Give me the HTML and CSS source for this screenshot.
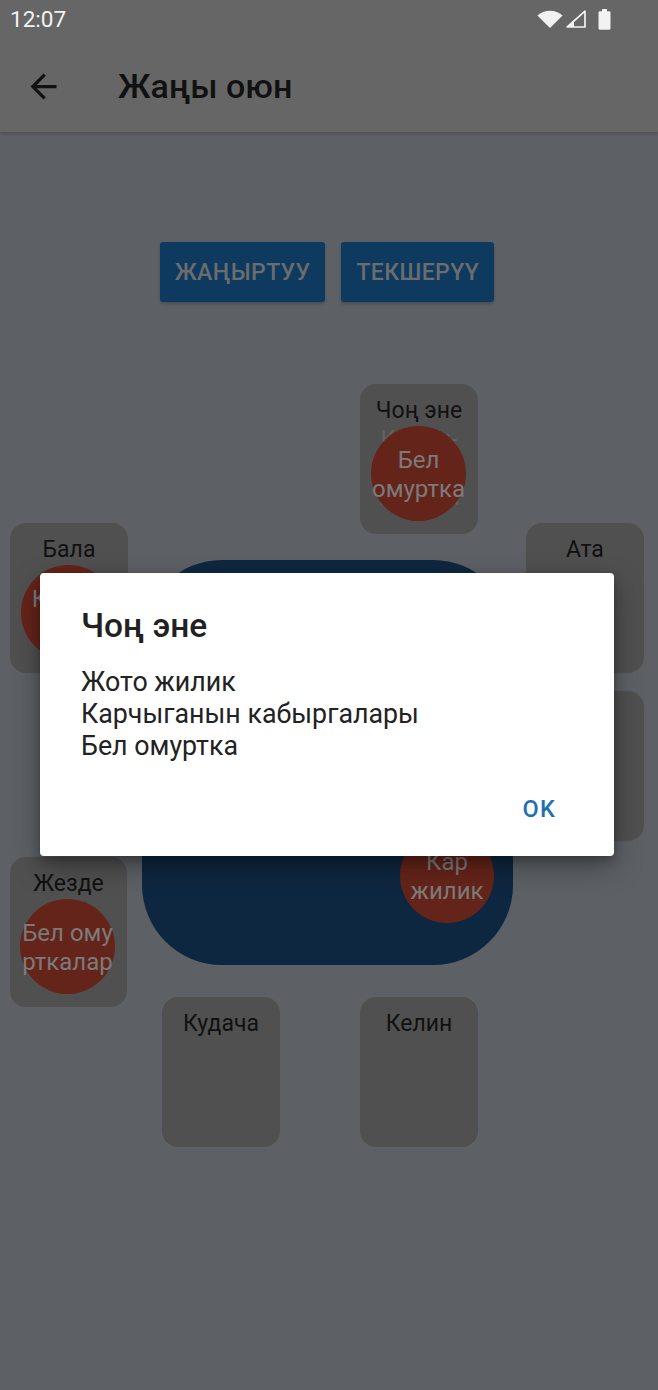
FILE: index.html
```html
<!DOCTYPE html>
<html lang="ky">
<head>
<meta charset="utf-8">
<title>Жаңы оюн</title>
<link rel="stylesheet" href="styles.css">
</head>
<body>
<div class="screen">
  <div class="status">
    <span class="time">12:07</span>
    <div class="sys-icons">
      <svg class="ic-wifi" width="26" height="18" viewBox="0 0 26 18"><path d="M13 18 L0.4 5.6 A18.5 18.5 0 0 1 25.6 5.6 Z" fill="#f2f2f2"/></svg>
      <svg class="ic-signal" width="20" height="18" viewBox="0 0 20 18"><path d="M19 1.2 V17 H1.2 Z" fill="none" stroke="#f2f2f2" stroke-width="1.7" stroke-linejoin="round"/><path d="M1.2 17 L8 10.4 V17 Z" fill="#f2f2f2"/></svg>
      <svg class="ic-battery" width="13" height="21" viewBox="0 0 13 21"><rect x="4" y="0" width="5" height="3" rx="0.6" fill="#f2f2f2"/><rect x="0.5" y="2.2" width="12" height="18.5" rx="1.4" fill="#f2f2f2"/></svg>
    </div>
  </div>

  <header class="appbar">
    <svg class="back" width="39" height="39" viewBox="0 0 24 24"><path d="M20 11H7.83l5.59-5.59L12 4l-8 8 8 8 1.41-1.41L7.83 13H20v-2z" fill="#111"/></svg>
    <h1 class="title">Жаңы оюн</h1>
  </header>

  <main class="content">
    <div class="actions">
      <button class="btn">Жаңыртуу</button>
      <button class="btn">Текшерүү</button>
    </div>

    <div class="board">
      <div class="table">
        <div class="token token--table"><span>Кар</span><span>жилик</span></div>
      </div>

      <div class="seat seat--chon-ene">
        <div class="seat-label">Чоң эне</div>
        <div class="seat-faint">Карчы-</div>
        <div class="seat-faint">ганын</div>
        <div class="seat-faint">кабыра</div>
        <div class="token"><span>Бел</span><span>омуртка</span></div>
      </div>

      <div class="seat seat--bala">
        <div class="seat-label">Бала</div>
        <div class="token"><span>Карчы</span><span>нын</span></div>
      </div>

      <div class="seat seat--ata">
        <div class="seat-label">Ата</div>
      </div>

      <div class="seat seat--ene">
        <div class="seat-label">Эне</div>
      </div>

      <div class="seat seat--jezde">
        <div class="seat-label">Жезде</div>
        <div class="token"><span>Бел ому</span><span>рткалар</span></div>
      </div>

      <div class="seat seat--kudacha">
        <div class="seat-label">Кудача</div>
      </div>

      <div class="seat seat--kelin">
        <div class="seat-label">Келин</div>
      </div>
    </div>
  </main>

  <div class="dialog" role="dialog">
    <h2 class="dialog-title">Чоң эне</h2>
    <div class="dialog-body">
      <div>Жото жилик</div>
      <div>Карчыганын кабыргалары</div>
      <div>Бел омуртка</div>
    </div>
    <div class="dialog-actions">
      <button class="dialog-btn">OK</button>
    </div>
  </div>
</div>
</body>
</html>
```

FILE: styles.css
```css
* { box-sizing: border-box; }

html, body {
  margin: 0;
  padding: 0;
  background: #5d6166;
  font-family: Roboto, "Noto Sans", "Liberation Sans", sans-serif;
}

.screen {
  position: relative;
  width: 658px;
  height: 1390px;
  overflow: hidden;
  background: #5d6166;
}

/* status bar */
.status {
  height: 40px;
  background: #666666;
  display: flex;
  align-items: center;
  justify-content: space-between;
  padding: 0 47px 2px 10px;
}
.time {
  color: #f2f2f2;
  font-size: 22.5px;
}
.sys-icons {
  display: flex;
  align-items: center;
  gap: 3px;
}
.ic-signal { margin-right: 9px; }

/* app bar */
.appbar {
  height: 92px;
  background: #666666;
  display: flex;
  align-items: center;
  padding-left: 24px;
  box-shadow: 0 2px 3px rgba(0, 0, 0, 0.18);
  position: relative;
  z-index: 1;
}
.back { display: block; flex: none; }
.title {
  margin: 0 0 0 55px;
  font-size: 34px;
  font-weight: 500;
  color: #111;
}

/* actions */
.actions {
  display: flex;
  justify-content: center;
  gap: 16px;
  padding: 110px 4px 0 0;
}
.btn {
  height: 60px;
  border: none;
  border-radius: 3px;
  background: #0f3a5f;
  color: #6a6c6e;
  font-family: inherit;
  font-size: 23px;
  font-weight: 500;
  text-transform: uppercase;
  letter-spacing: 0.4px;
  padding: 0 15px;
  box-shadow: 0 2px 3px rgba(0, 0, 0, 0.2);
}

/* board: seats placed around the table like nodes of a diagram */
.board {
  position: relative;
  height: 1088px;
}
.table {
  position: absolute;
  left: 142px;
  top: 258px;
  width: 371px;
  height: 405px;
  border-radius: 80px;
  background: #0e2740;
}
.seat {
  position: absolute;
  width: 118px;
  height: 150px;
  border-radius: 16px;
  background: #505050;
  overflow: hidden;
  padding-top: 12px;
  text-align: center;
  font-size: 23px;
  line-height: 29px;
  white-space: nowrap;
}
.seat-label { color: #111; }
.seat-faint { color: #626262; }

.seat--chon-ene { left: 360px; top: 82px; }
.seat--bala     { left: 10px;  top: 221px; }
.seat--ata      { left: 526px; top: 221px; }
.seat--ene      { left: 526px; top: 389px; }
.seat--jezde    { left: 10px;  top: 555px; width: 117px; }
.seat--kudacha  { left: 162px; top: 695px; }
.seat--kelin    { left: 360px; top: 695px; }

.token {
  position: absolute;
  left: 11px;
  top: 42px;
  width: 95px;
  height: 95px;
  border-radius: 50%;
  background: #65241a;
  color: #7b7b7b;
  font-size: 24px;
  line-height: 29px;
  display: flex;
  flex-direction: column;
  align-items: center;
  justify-content: center;
  padding-top: 2px;
  white-space: nowrap;
}
.seat--jezde .token { left: 10px; }
.token--table {
  left: 258px;
  top: 269px;
  width: 94px;
  height: 94px;
}

/* dialog */
.dialog {
  position: absolute;
  left: 40px;
  top: 573px;
  width: 574px;
  height: 283px;
  background: #fff;
  border-radius: 4px;
  box-shadow: 0 10px 28px rgba(0, 0, 0, 0.35), 0 4px 10px rgba(0, 0, 0, 0.2);
  padding: 33px 0 0 41px;
  z-index: 5;
}
.dialog-title {
  margin: 0;
  font-size: 33.5px;
  line-height: 40px;
  font-weight: 500;
  color: #212121;
}
.dialog-body {
  margin-top: 20px;
  font-size: 26.8px;
  line-height: 32px;
  color: #222;
}
.dialog-actions {
  display: flex;
  justify-content: flex-end;
  padding-right: 42px;
  margin-top: 23px;
}
.dialog-btn {
  height: 48px;
  border: none;
  background: transparent;
  color: #1f70b3;
  font-family: inherit;
  font-size: 23.5px;
  font-weight: 500;
  letter-spacing: 1.2px;
  padding: 0 16px;
}
```
